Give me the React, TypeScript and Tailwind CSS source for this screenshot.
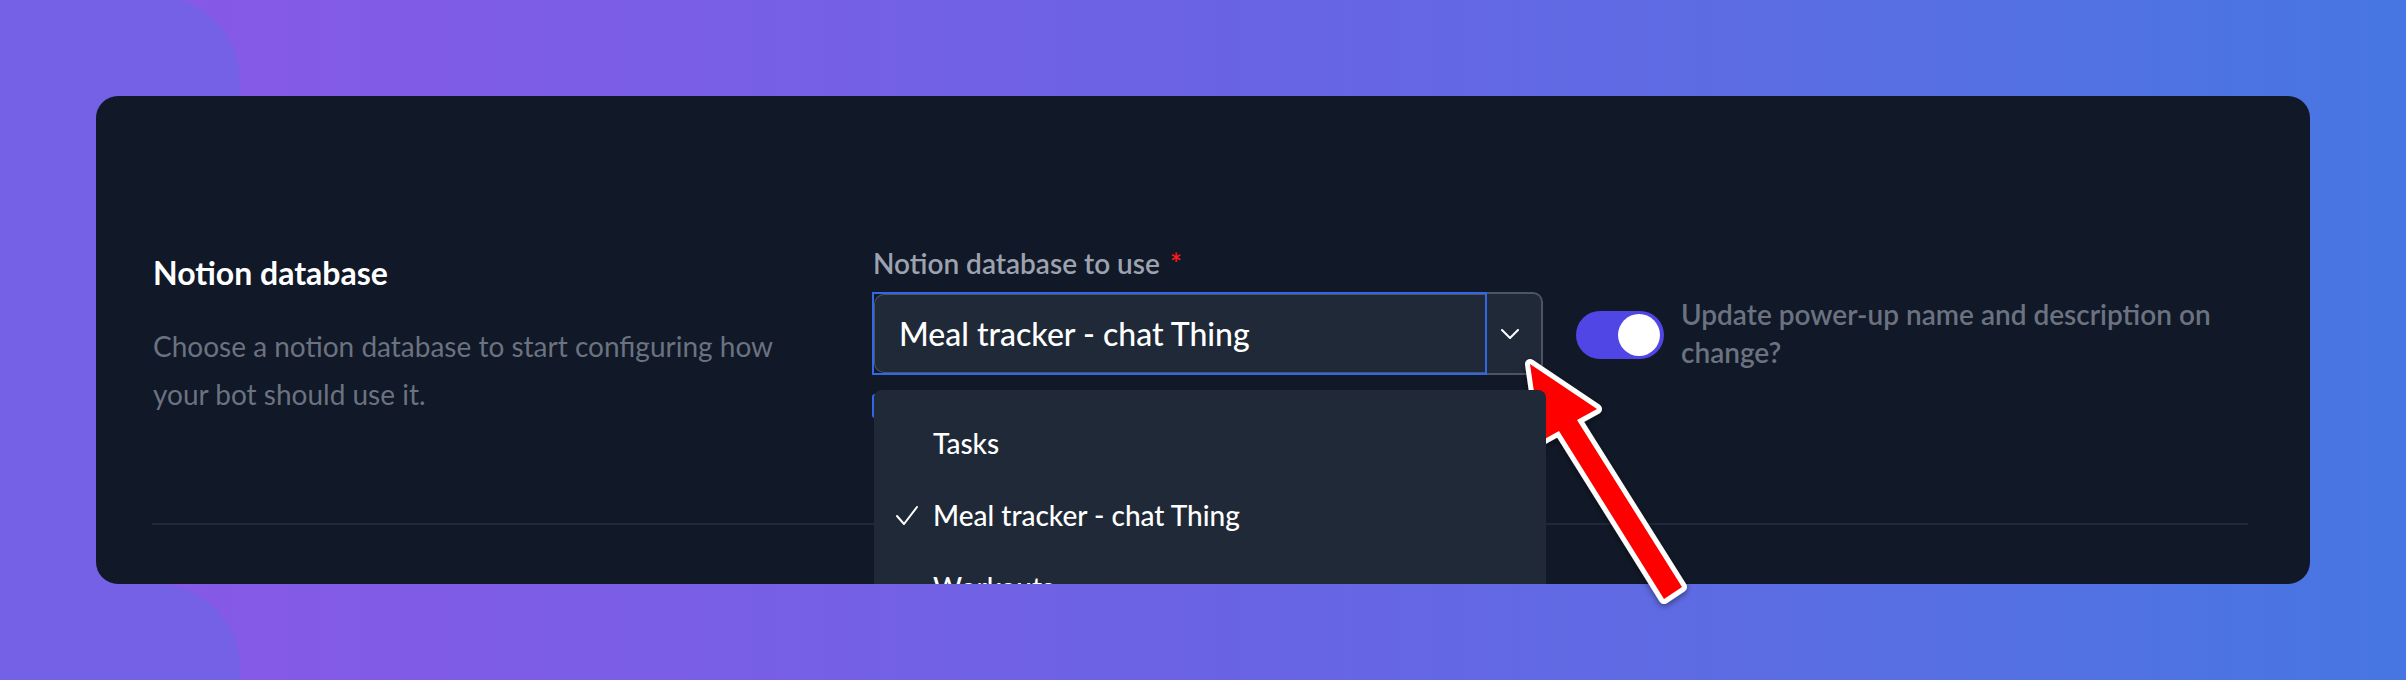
import { useState } from "react";

const OPTIONS = ["Tasks", "Meal tracker - chat Thing", "Workouts"];

function Chevron() {
  return (
    <svg width="18" height="10" viewBox="0 0 18 10" fill="none">
      <polyline points="1,1 9,9 17,1" stroke="white" strokeWidth="2" strokeLinecap="round" strokeLinejoin="round" />
    </svg>
  );
}

function CheckMark() {
  return (
    <svg width="22" height="19" viewBox="0 0 22 19" fill="none">
      <polyline points="1,10 8,18 21,1" stroke="white" strokeWidth="2" strokeLinecap="round" strokeLinejoin="round" />
    </svg>
  );
}

// annotation arrow drawn over the screenshot
function RedArrow() {
  return (
    <svg className="pointer-events-none absolute left-0 top-0" width="2406" height="680" viewBox="0 0 2406 680">
      <defs>
        <filter id="arrowShadow" x="-20%" y="-20%" width="140%" height="140%">
          <feDropShadow dx="0" dy="2" stdDeviation="3" floodColor="#000" floodOpacity="0.45" />
        </filter>
      </defs>
      <polygon
        points="1530,364 1597,409 1577,420 1682,587 1664,599 1559,431 1541,441"
        fill="#ff0000"
        stroke="white"
        strokeWidth="10"
        strokeLinejoin="round"
        paintOrder="stroke"
        filter="url(#arrowShadow)"
      />
    </svg>
  );
}

export default function App() {
  const [selected] = useState(OPTIONS[1]);
  const [enabled, setEnabled] = useState(true);

  return (
    <div className="relative h-[680px] w-full overflow-hidden bg-linear-to-r from-[#8b57e7] via-[#6a63e4] to-[#4676e2] px-[96px] pt-[96px] font-['Lato',sans-serif]">
      {/* background shapes */}
      <div className="absolute left-0 top-[-4px] h-[588px] w-[240px] rounded-tr-[85px] bg-[#7461e6]" />
      <div className="absolute left-0 top-[584px] h-[200px] w-[240px] rounded-tr-[84px] bg-[#7461e6]" />

      <div className="relative h-[488px] overflow-hidden rounded-[22px] bg-[#111827] pl-14 pr-[62px] pt-[149px]">
        <div className="flex items-start">
          {/* Section description */}
          <div className="mt-[10px] w-[720px] shrink-0 pl-px">
            <h2 className="text-[32px] font-bold leading-[36px] text-white">Notion database</h2>
            <p className="mt-[31px] max-w-[640px] text-[28px] leading-[48px] text-[#6b7280]">
              Choose a notion database to start configuring how your bot should use it.
            </p>
          </div>

          {/* Select */}
          <div className="relative w-[671px] shrink-0">
            <label className="block pl-px text-[28px] font-semibold leading-[36px] text-[#9ca3af]">
              Notion database to use
              <span className="ml-2.5 text-[#ff1a1a]">*</span>
            </label>
            <div className="mt-[11px] flex h-[83px]">
              <div className="w-[615px] border-2 border-[#3268e3]">
                <div className="flex h-full items-center rounded-l-[10px] border border-r-0 border-[#4b5563] bg-[#1f2937] pl-[24px] text-[32px] font-medium text-white">
                  {selected}
                </div>
              </div>
              <div className="flex w-[56px] items-center justify-center rounded-r-[10px] border-2 border-l-0 border-[#4b5563] bg-[#1f2937] pr-[8px]">
                <Chevron />
              </div>
            </div>
            <div className="mt-[19px] h-[24px] w-[24px] rounded-[3px] border-2 border-[#3268e3]" />

            {/* Open dropdown */}
            <ul className="absolute left-[2px] top-[145px] z-10 w-[672px] rounded-t-[8px] bg-[#1f2937] pt-[17px] text-[28px] font-medium text-white">
              {OPTIONS.map((opt) => (
                <li key={opt} className="flex h-[72px] items-center">
                  <span className="flex w-[59px] justify-end pr-[15px]">
                    {opt === selected && <CheckMark />}
                  </span>
                  <span>{opt}</span>
                </li>
              ))}
            </ul>
          </div>

          {/* Toggle */}
          <div className="ml-[33px] mt-[50px] flex flex-1 items-start">
            <button
              onClick={() => setEnabled(!enabled)}
              className={`mt-[16px] flex h-[48px] w-[88px] shrink-0 items-center rounded-full px-[4px] ${enabled ? "justify-end bg-[#4f46e5]" : "justify-start bg-[#374151]"}`}
            >
              <span className="h-[42px] w-[42px] rounded-full bg-white" />
            </button>
            <p className="ml-[17px] text-[28px] font-semibold leading-[38px] text-[#6b7280]">
              Update power-up name and description on change?
            </p>
          </div>
        </div>

        <div className="mt-[105px] h-[2px] bg-[#1f2937]" />
      </div>

      <RedArrow />
    </div>
  );
}
